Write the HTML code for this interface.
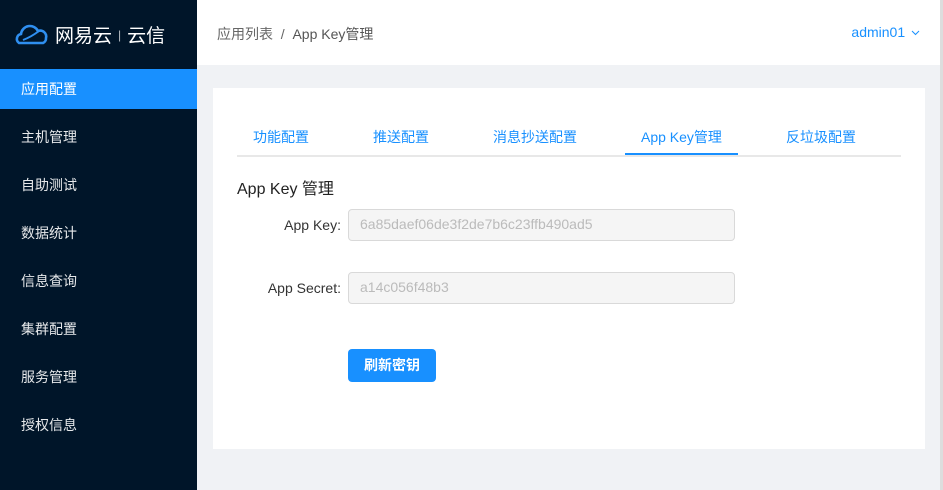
<!DOCTYPE html>
<html><head><meta charset="utf-8"><style>
*{margin:0;padding:0;box-sizing:border-box}
body{width:943px;height:490px;overflow:hidden;background:#f0f2f5;font-family:"Liberation Sans","Noto Sans CJK SC",sans-serif;position:relative}
.side{position:absolute;left:0;top:0;width:197px;height:490px;background:#001529}
.logo{height:69px;display:flex;align-items:center;padding-left:13px;color:#fff;font-size:19px}
.item{height:48px;line-height:40px;padding-left:21px;color:#fff;font-size:14px;opacity:.9}
.item.act{background:#1890ff;height:40px;opacity:1;margin-bottom:8px}
.hdr{position:absolute;left:197px;top:0;width:743px;height:65px;background:#fff}
.crumb{position:absolute;left:20px;top:24px;font-size:14px;color:#666}
.user{position:absolute;right:20px;top:24px;font-size:14px;color:#1890ff}
.sb{position:absolute;right:0;top:0;width:3px;height:490px;background:#ddd}
.card{position:absolute;left:213px;top:88px;width:712px;height:361px;background:#fff}
.tabs{position:absolute;left:24px;top:27px;width:664px;height:42px;border-bottom:2px solid #e8e8e8}
.tab{position:absolute;top:12px;font-size:14px;color:#1890ff}
.ink{position:absolute;left:388px;top:38px;width:113px;height:2px;background:#1890ff}
h3{position:absolute;left:24px;top:87px;font-size:16px;font-weight:normal;color:#222}
.lab{position:absolute;font-size:14px;color:#333;text-align:right;width:110px;left:18px}
.inp{position:absolute;left:135px;width:387px;height:32px;border:1px solid #d9d9d9;border-radius:4px;background:#f5f5f5;color:#bbb;font-size:14px;padding:6px 11px}
.btn{position:absolute;left:135px;top:261px;width:88px;height:33px;background:#1890ff;color:#fff;border-radius:4px;font-size:14px;font-weight:bold;text-align:center;line-height:33px}
</style></head><body>
<div class="side">
<div class="logo"><svg width="38" height="24" viewBox="0 0 38 24"><path d="M6 20a5 5 0 0 1 2-9 9 9 0 0 1 17-3 6 6 0 0 1 8 7 5 5 0 0 1-3 5z" fill="none" stroke="#2f8ff0" stroke-width="2.6"/><path d="M10 17q8-3 16-9" stroke="#2f8ff0" stroke-width="2" fill="none"/></svg><span style="margin-left:4px">网易云</span><span style="font-size:12px;margin:0 6px;opacity:.7">|</span><span>云信</span></div>
<div class="item act">应用配置</div>
<div class="item">主机管理</div>
<div class="item">自助测试</div>
<div class="item">数据统计</div>
<div class="item">信息查询</div>
<div class="item">集群配置</div>
<div class="item">服务管理</div>
<div class="item">授权信息</div>
</div>
<div class="hdr"><div class="crumb">应用列表 &nbsp;/&nbsp; <span style="color:#555">App Key管理</span></div><div class="user">admin01 <svg width="9" height="6" viewBox="0 0 9 6" style="vertical-align:middle;margin-left:2px"><path d="M1 1l3.5 3.5L8 1" fill="none" stroke="#1890ff" stroke-width="1"/></svg></div></div>
<div class="sb"></div>
<div class="card">
<div class="tabs">
<div class="tab" style="left:16px">功能配置</div>
<div class="tab" style="left:136px">推送配置</div>
<div class="tab" style="left:256px">消息抄送配置</div>
<div class="tab" style="left:404px">App Key管理</div>
<div class="tab" style="left:549px">反垃圾配置</div>
<div class="ink"></div>
</div>
<h3>App Key 管理</h3>
<div class="lab" style="top:129px">App Key:</div>
<div class="inp" style="top:121px">6a85daef06de3f2de7b6c23ffb490ad5</div>
<div class="lab" style="top:192px">App Secret:</div>
<div class="inp" style="top:184px">a14c056f48b3</div>
<div class="btn">刷新密钥</div>
</div>
</body></html>
